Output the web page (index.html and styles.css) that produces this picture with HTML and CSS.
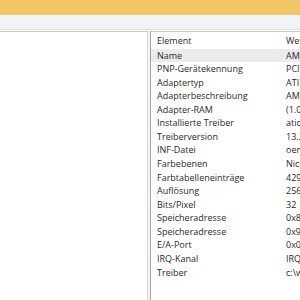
FILE: index.html
```
<!DOCTYPE html>
<html lang="de">
<head>
<meta charset="utf-8">
<title>Systeminformationen</title>
<link rel="stylesheet" href="styles.css">
</head>
<body>
<div class="window">
  <div class="titlebar"></div>
  <div class="toolbar"></div>
  <div class="content">
    <div class="tree-pane"></div>
    <div class="splitter"></div>
    <div class="list-pane">
      <div class="row header"><span class="c1">Element</span><span class="c2">Wert</span></div>
      <div class="row hover"><span class="c1">Name</span><span class="c2">AMD Radeon HD 7800 Series</span></div>
      <div class="row"><span class="c1">PNP-Gerätekennung</span><span class="c2">PCI\VEN_1002&amp;DEV_6819</span></div>
      <div class="row"><span class="c1">Adaptertyp</span><span class="c2">ATI display adapter (0x6819)</span></div>
      <div class="row"><span class="c1">Adapterbeschreibung</span><span class="c2">AMD Radeon HD 7800 Series</span></div>
      <div class="row"><span class="c1">Adapter-RAM</span><span class="c2">(1.073.741.824) Bytes</span></div>
      <div class="row"><span class="c1">Installierte Treiber</span><span class="c2">aticfx64.dll,aticfx64.dll</span></div>
      <div class="row"><span class="c1">Treiberversion</span><span class="c2">13.251.0.0</span></div>
      <div class="row"><span class="c1">INF-Datei</span><span class="c2">oem12.inf (ati2mtag_R575 Abschnitt)</span></div>
      <div class="row"><span class="c1">Farbebenen</span><span class="c2">Nicht verfügbar</span></div>
      <div class="row"><span class="c1">Farbtabelleneinträge</span><span class="c2">4294967296</span></div>
      <div class="row"><span class="c1">Auflösung</span><span class="c2">2560 x 1440 x 59 Hertz</span></div>
      <div class="row"><span class="c1">Bits/Pixel</span><span class="c2">32</span></div>
      <div class="row"><span class="c1">Speicheradresse</span><span class="c2">0x80000000-0x8FFFFFFF</span></div>
      <div class="row"><span class="c1">Speicheradresse</span><span class="c2">0x90000000-0x9003FFFF</span></div>
      <div class="row"><span class="c1">E/A-Port</span><span class="c2">0x0000E000-0x0000E0FF</span></div>
      <div class="row"><span class="c1">IRQ-Kanal</span><span class="c2">IRQ 4294967294</span></div>
      <div class="row"><span class="c1">Treiber</span><span class="c2">c:\windows\system32\drivers\atikmpag.sys</span></div>
    </div>
  </div>
</div>
</body>
</html>
```
FILE: styles.css
```
html, body {
  margin: 0;
  padding: 0;
  background: #ffffff;
}
.window {
  width: 300px;
  height: 300px;
  overflow: hidden;
  display: flex;
  flex-direction: column;
  font-family: "Open Sans", "Noto Sans", sans-serif;
  font-size: 9px;
  color: #2a2a2a;
}
.titlebar {
  height: 15px;
  background: #f1c666;
  flex: none;
}
.toolbar {
  height: 14px;
  background: #f2f3f5;
  border-bottom: 1px solid #dcdde0;
  flex: none;
}
.content {
  flex: 1;
  display: flex;
  padding-top: 1px;
  min-height: 0;
}
.tree-pane {
  width: 147px;
  flex: none;
  border-top: 1px solid #c9c9c9;
  border-right: 1px solid #dadada;
  background: #ffffff;
}
.splitter {
  width: 2px;
  flex: none;
  background: #f4f4f4;
}
.list-pane {
  flex: 1;
  min-width: 0;
  border-top: 1px solid #c9c9c9;
  border-left: 1px solid #a3a3a3;
  background: #ffffff;
  overflow: hidden;
}
.row {
  display: flex;
  height: 13.57px;
  line-height: 13.57px;
  white-space: nowrap;
}
.row.header {
  height: 16.5px;
  line-height: 18px;
}
.row.hover {
  background: #ebebeb;
}
.c1 {
  width: 135px;
  flex: none;
  padding-left: 6px;
  box-sizing: border-box;
  overflow: hidden;
}
.c2 {
  flex: none;
}
```
